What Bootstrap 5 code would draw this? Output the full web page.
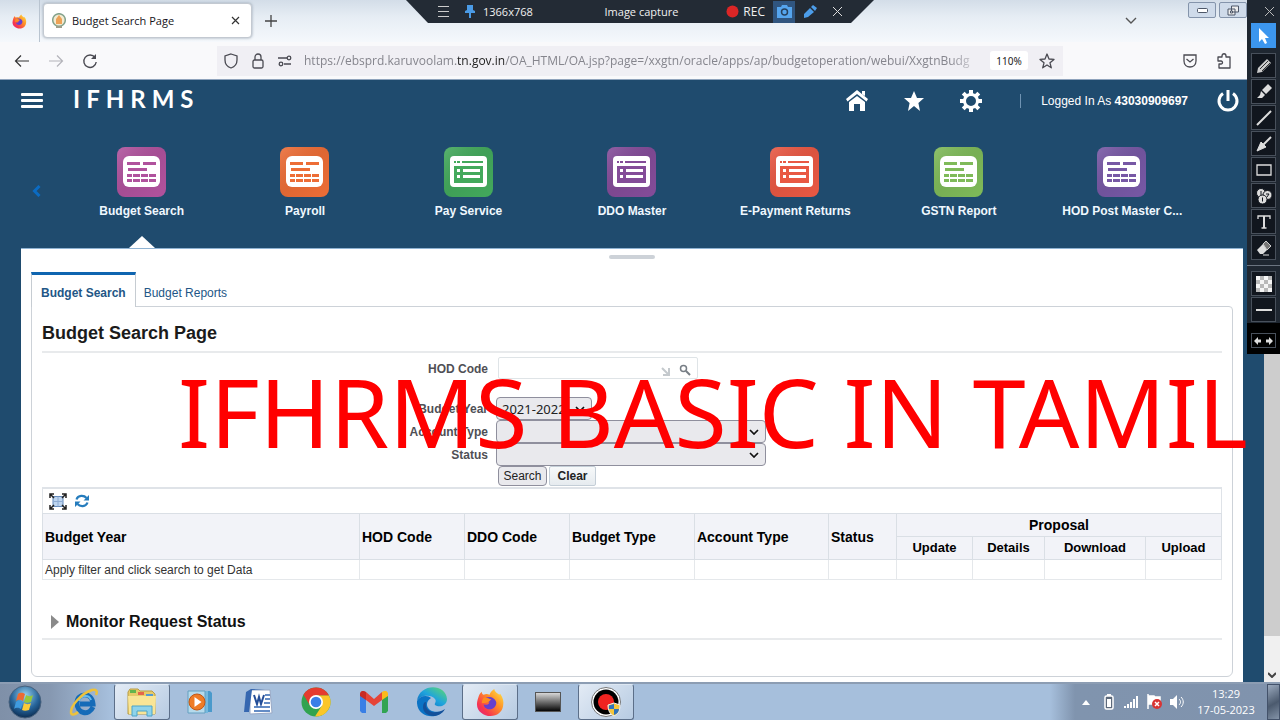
<!DOCTYPE html>
<html lang="en">
<head>
<meta charset="utf-8">
<meta name="viewport" content="width=device-width, initial-scale=1">
<title>Budget Search Page</title>
<link href="https://cdn.jsdelivr.net/npm/bootstrap@5.3.0/dist/css/bootstrap.min.css" rel="stylesheet">
<style>
  body { font-family: "Liberation Sans", Arial, sans-serif; font-size: 12px; line-height: 16px; color: #333; background: #1f4b6e; overflow-x: hidden; }
  svg { display: block; flex: none; }
  button { font-family: inherit; }
  .plain { background: none; border: 0; padding: 0; color: inherit; display: flex; align-items: center; justify-content: center; }
  .ui-font { font-family: "Noto Sans", "Open Sans", sans-serif; }

  /* browser tabs */
  .tabstrip { height: 42px; background: linear-gradient(180deg, #d3dde8 0, #e6edf4 40%, #f5f8fc 100%); }
  .pinned { width: 40px; border-right: 1px solid #b9c4d0; }
  .tab-active { width: 209px; height: 35px; margin: 3px 0 0 3px; padding: 0 11px 0 8px; background: #fff; border: 1px solid #c3c9d1; border-radius: 4px; box-shadow: 0 0 3px #9aa5b2; font-family: "Open Sans", sans-serif; font-size: 11px; color: #15141a; gap: 6px; }
  .newtab { width: 38px; height: 42px; color: #444; }
  .tablist { width: 24px; height: 40px; margin-right: 45px; color: #555; }
  .winbtn { width: 28px; height: 16px; margin: 2px 3px 0 0; background: #cfdbea; border: 1px solid #8494ab; border-radius: 2px; color: #4d5768; }
  .strip-end { width: 33px; }

  /* address bar */
  .navrow { height: 38px; background: #f9f9fb; border-bottom: 1px solid #8fa3bc; color: #4a4a52; }
  .nav-side { width: 217px; flex: none; }
  .nav-left { padding-left: 14px; gap: 18px; }
  .nav-right { padding-right: 48px; gap: 18px; justify-content: flex-end; }
  .urlbox { height: 30px; background: #f0eff4; padding: 0 8px 0 6px; gap: 11px; min-width: 0; }
  .url-text { font-size: 12px; color: #85858d; white-space: nowrap; overflow: hidden; min-width: 0; margin-right: -4px; -webkit-mask-image: linear-gradient(90deg, #000 95%, transparent); mask-image: linear-gradient(90deg, #000 95%, transparent); font-family: "Open Sans", sans-serif; }
  .url-text b { color: #222; font-weight: 400; }
  .zoom-pill { width: 38px; height: 19px; background: #fff; border-radius: 3px; font-size: 10px; color: #222; flex: none; }

  /* application header */
  .app { min-width: 0; background: #1f4b6e; }
  .app-head { height: 42px; padding: 0 24px 0 21px; color: #fff; }
  .logo { font-family: Lato, sans-serif; font-weight: 700; font-size: 24px; line-height: 24px; gap: 6px; margin-left: 29px; padding-bottom: 4px; }
  .head-icons { gap: 33px; }
  .head-sep { width: 1px; height: 14px; background: #6f93b3; }
  .launcher { position: relative; padding: 25px 60px 0; height: 126px; }
  .launch { flex: 1 1 0; min-width: 0; position: relative; color: #eff8ff; font-weight: 700; text-decoration: none; }
  .launch svg { margin-bottom: 6px; }
  .launch.current::after { content: ""; position: absolute; bottom: 0; left: 50%; margin-left: -13px; border: 13px solid transparent; border-top: 0; border-bottom: 12px solid #fff; }
  .prev { position: absolute; left: 28px; top: 60px; width: 16px; height: 18px; color: #0b6bc2; }

  /* white page */
  .sheet { margin: 0 21px; background: #fff; padding: 6px 10px 5px; border-top: 1px solid #8fb3d3; }
  .grip { width: 46px; height: 4px; background: #cdd2d8; border-radius: 2px; }
  .subtabs { margin-top: 13px; position: relative; z-index: 1; }
  .subtabs a { height: 34px; padding: 7px 8px 0; display: flex; align-items: center; text-decoration: none; color: #225686; }
  .subtabs a.on { height: 35px; margin-bottom: -1px; background: #fff; border: 1px solid #c6ccd2; border-top: 3px solid #0f65b0; border-bottom: 0; font-weight: 700; padding: 3px 9px 0; }
  .pane { border: 1px solid #cdd2d8; border-radius: 0 4px 6px 6px; padding: 14px 10px 0; }
  .pane h1 { font-size: 18px; line-height: 24px; font-weight: 700; color: #1b1b1b; margin: 0; padding-bottom: 6px; border-bottom: 2px solid #e8eaec; }
  .query { padding-top: 4px; }
  .query label { width: 446px; text-align: right; font-weight: 700; color: #4f4f55; }
  .lov-row { margin-bottom: 18px; }
  .lov { width: 200px; height: 22px; margin-left: 10px; border: 1px solid #dfe4e7; border-radius: 2px; padding: 0 6px 0 0; }
  .lov input { border: 0; background: none; outline: 0; min-width: 0; font-size: 12px; }
  .query select { margin-left: 8px; height: 23px; width: 270px; border: 1px solid #8f8f9d; border-radius: 4px; padding: 0 20px 0 5px; font: 13px/20px "Noto Sans", sans-serif; color: #222; appearance: none; background: #e9e9ed url("data:image/svg+xml,%3Csvg xmlns='http://www.w3.org/2000/svg' width='10' height='6'%3E%3Cpath d='M1 1l4 4 4-4' fill='none' stroke='%23111' stroke-width='1.7'/%3E%3C/svg%3E") no-repeat right 6px center; }
  .query select.short { width: 96px; }
  .actions { margin: 0 0 1px 456px; gap: 2px; }
  .actions button { height: 20px; border: 1px solid #8f8f9d; border-radius: 4px; background: #e9e9ed; font-size: 12px; line-height: 16px; padding: 0 4px; width: 49px; color: #222; }
  .actions .clear { border-color: #c4ced7; border-radius: 2px; background: linear-gradient(#f7f9fa, #e6ebef); font-weight: 700; width: 47px; }
  .grid-tools { height: 26px; border: 1px solid #dfe3e8; border-width: 2px 1px 0; padding: 0 6px; gap: 8px; }
  .results { width: 100%; table-layout: fixed; border-collapse: collapse; }
  .results th { background: #f2f3f8; color: #000; font-size: 14px; line-height: 16px; }
  .results thead tr + tr th { font-size: 13px; }
  .results th, .results td { border: 1px solid #dadfe5; padding: 3px 2px; height: 22px; white-space: nowrap; }
  .results td { height: 20px; padding: 1px 2px; border-color: #e5e8eb; }
  .monitor { margin-top: 32px; padding: 0 0 6px 9px; border-bottom: 2px solid #e8eaec; }
  .monitor button { gap: 7px; font-size: 16px; line-height: 20px; font-weight: 700; color: #111; }
  .scroll { width: 16px; flex: none; background: #f0f0f0; }
  .thumb { flex: 1; background: #cdcdcd; }
  .scroll-down { height: 46px; padding-bottom: 4px; color: #444; }
  .caption { position: absolute; left: 178px; top: 276px; font-family: "Noto Sans", sans-serif; font-size: 95px; line-height: 110px; color: #f00; white-space: nowrap; pointer-events: none; z-index: 10; }

  /* recorder overlays */
  .capture { position: absolute; z-index: 9; top: 0; left: 50%; transform: translateX(-50%); width: 468px; height: 23px; background: #232b35; clip-path: polygon(0 0, 100% 0, 445px 100%, 22px 100%); color: #f0f0f0; padding: 0 32px; font-family: "Open Sans", sans-serif; font-size: 11px; }
  .capture .rec { font-size: 12px; }
  .capture .snap { width: 22px; height: 22px; background: #30557f; color: #55a5ee; }
  .tools { position: absolute; z-index: 9; right: 0; top: 0; width: 33px; height: 353px; background: #1f2731; color: #ddd; padding-left: 4px; }
  .tools button { width: 25px; height: 25px; margin-bottom: 1px; border: 1px solid #48505b; background: #11161e; }
  .tools button.shut { border: 0; background: none; height: 23px; width: 33px; margin: 0 0 0 2px; }
  .tools button.on { background: #3c96ee; border: 0; margin-bottom: 5px; color: #fff; }
  .tools hr { margin: 5px 0 5px -4px; border-color: #6b7480; width: 33px; opacity: 1; }
  .tools .resize { margin-left: -4px; background: #000; padding: 10px 0 6px 4px; }
  .tools .resize button { height: 15px; margin: 0; background: #000; }

  /* taskbar */
  .taskbar { height: 38px; border-top: 2px solid #8c9db3; background: linear-gradient(90deg, #7f90a8 0, #8698b1 50px, #a6bfdc 110px, #a6bfdc calc(100% - 230px), #8094ae calc(100% - 205px), #8093ad 100%); color: #fff; }
  .start { width: 50px; margin-right: 6px; }
  .task { width: 56px; height: 36px; margin-right: 2px; }
  .task.open { border: 1px solid #5c6f89; border-top-color: #dde7f2; border-radius: 3px; background: linear-gradient(135deg, #e3ebf5, #b7cbe2); }
  .tray { gap: 8px; }
  .clock { width: 66px; font-family: "Open Sans", sans-serif; font-size: 11px; text-align: center; }
  .desktop { width: 13px; background: linear-gradient(150deg, #9aa9bd, #4b5a6e 55%, #8393a8); border: 1px solid #43526a; }
</style>
</head>
<body class="d-flex flex-column min-vh-100 position-relative">
<svg width="0" height="0" class="position-absolute" aria-hidden="true">
  <defs>
    <linearGradient id="fx" x1="1" y1="0" x2="0" y2="1"><stop offset="0" stop-color="#fff04a"/><stop offset=".4" stop-color="#ff9026"/><stop offset=".75" stop-color="#f7354f"/><stop offset="1" stop-color="#d8228b"/></linearGradient>
    <linearGradient id="edge" x1="0" y1="1" x2="1" y2="0"><stop offset="0" stop-color="#0b60b8"/><stop offset=".5" stop-color="#1fa4dd"/><stop offset="1" stop-color="#62dc68"/></linearGradient>
    <radialGradient id="orb" cx=".5" cy=".3" r=".7"><stop offset="0" stop-color="#9bd4ef"/><stop offset=".6" stop-color="#27659b"/><stop offset="1" stop-color="#0c2d52"/></radialGradient>
    <linearGradient id="metal" x1="0" y1="0" x2="0" y2="1"><stop offset="0" stop-color="#ddd"/><stop offset="1" stop-color="#000"/></linearGradient>
    <linearGradient id="shine" x1="0" y1="0" x2="1" y2="1"><stop offset="0" stop-color="#fff" stop-opacity=".12"/><stop offset=".5" stop-color="#000" stop-opacity=".06"/><stop offset="1" stop-color="#000" stop-opacity="0"/></linearGradient>
  </defs>
  <symbol id="firefox" viewBox="0 0 30 30">
    <path d="M3 8c1-2 2-3 3-4 0 2 1 3 2 3 2-1 4-1 6 0 1-3 3-5 5-6 0 3 3 4 5 6l1-1c3 4 4 8 3 13-1 6-6 10-13 10S1 24 1 17c0-3 1-6 2-9z" fill="url(#fx)"/>
    <path d="M10 10c4-2 10 0 11 5 0 5-4 7-7 7-4 0-6-3-6-5 3 1 5 0 6-2-2 0-3-1-2-3z" fill="#6540cf"/><path d="M8 10c3-1 5 1 8 2-2 1-2 3-5 3-2 1-4 0-5 1 0-3 1-5 2-6z" fill="#ff8b1f"/>
  </symbol>
  <symbol id="form" viewBox="0 0 50 50">
    <rect width="49" height="50" rx="8" fill="currentColor"/><rect width="49" height="50" rx="8" fill="url(#shine)"/>
    <rect x="6" y="9" width="37" height="31" rx="6" fill="#fff"/>
    <path d="M10 15h13v3H10zm16 0h13v3H26zM11 21h19v3H11zM10 27h5v3h-5zm6 0h7v3h-7zm8 0h7v3h-7zm8 0h7v3h-7zM10 32h5v3h-5zm6 0h7v3h-7zm8 0h7v3h-7zm8 0h7v3h-7z" fill="currentColor"/>
  </symbol>
  <symbol id="window" viewBox="0 0 50 50">
    <rect width="49" height="50" rx="8" fill="currentColor"/><rect width="49" height="50" rx="8" fill="url(#shine)"/>
    <rect x="6" y="9" width="37" height="31" rx="4" fill="#fff"/>
    <path d="M10 14h2v2h-2zm3 0h3v2h-3zm5 0h21v2H18zM10 19h29v17H10z" fill="currentColor"/>
    <path d="M13 22h3v3h-3zm6 0h17v3H19zM13 28h3v3h-3zm6 0h17v3H19z" fill="#fff"/>
  </symbol>
</svg>

<header>
  <div class="tabstrip d-flex">
    <div class="pinned d-flex align-items-center justify-content-center"><svg width="15" height="15"><use href="#firefox"/></svg></div>
    <div class="tab-active d-flex align-items-center">
      <svg width="14" height="16" viewBox="0 0 14 16"><circle cx="7" cy="7" r="6.300" fill="#f3ead0" stroke="#83a28c" stroke-width="1.500"/><path d="M7 2l3 4v5H4V6z" fill="#eda256"/><path d="M4 13h6v2H4z" fill="#9d9f8c"/></svg>
      <span class="flex-grow-1 text-nowrap">Budget Search Page</span>
      <button class="plain" aria-label="Close tab"><svg width="9" height="9" viewBox="0 0 9 9" stroke="#333" stroke-width="1.200"><path d="M1 1l7 7M8 1L1 8"/></svg></button>
    </div>
    <button class="plain newtab" aria-label="New tab"><svg width="12" height="12" viewBox="0 0 12 12" stroke="currentColor" stroke-width="1.300"><path d="M6 0v12M0 6h12"/></svg></button>
    <button class="plain tablist ms-auto" aria-label="List all tabs"><svg width="12" height="7" viewBox="0 0 12 7" fill="none" stroke="currentColor" stroke-width="1.400"><path d="M1 1l5 5 5-5"/></svg></button>
    <button class="plain winbtn" aria-label="Minimise"><svg width="11" height="5" viewBox="0 0 11 5" fill="#fff" stroke="currentColor"><rect x=".5" y=".5" width="10" height="4" rx="1"/></svg></button>
    <button class="plain winbtn me-0" aria-label="Restore"><svg width="12" height="11" viewBox="0 0 12 11" fill="#eee" stroke="currentColor"><path d="M4.500 1h7v6h-7zM1 4h7v6H1z"/><path d="M3.500 6h2v2h-2z"/></svg></button>
    <span class="strip-end"></span>
  </div>
  <div class="navrow d-flex align-items-center">
    <div class="nav-side nav-left d-flex">
      <button class="plain" aria-label="Back"><svg width="16" height="16" viewBox="0 0 16 16" fill="none" stroke="#333" stroke-width="1.200"><path d="M15 8H2M7 2.500L1.500 8 7 13.500"/></svg></button>
      <button class="plain" aria-label="Forward"><svg width="16" height="16" viewBox="0 0 16 16" fill="none" stroke="#b4b4ba" stroke-width="1.200"><path d="M1 8h13M9 2.500L14.500 8 9 13.500"/></svg></button>
      <button class="plain" aria-label="Reload"><svg width="16" height="16" viewBox="0 0 16 16" fill="none" stroke="currentColor" stroke-width="1.400"><path d="M13 4.500A6.200 6.200 0 1 0 14.200 9"/><path d="M14 1v5H9z" fill="currentColor" stroke="none"/></svg></button>
    </div>
    <div class="urlbox d-flex align-items-center flex-grow-1">
      <svg width="16" height="16" viewBox="0 0 16 16" fill="none" stroke="currentColor" stroke-width="1.300"><path d="M8 1l6 2v4c0 4-3 7-6 8-3-1-6-4-6-8V3z"/></svg>
      <svg width="16" height="16" viewBox="0 0 16 16" fill="none" stroke="currentColor" stroke-width="1.300"><rect x="3" y="7" width="10" height="8" rx="1.500"/><path d="M5 7V4a3 3 0 0 1 6 0v3"/></svg>
      <svg width="16" height="16" viewBox="0 0 16 16" fill="none" stroke="currentColor" stroke-width="1.300"><path d="M1 5h9M7 11h7"/><circle cx="12" cy="5" r="1.800"/><circle cx="4" cy="11" r="1.800"/></svg>
      <div class="url-text flex-grow-1">https://ebsprd.karuvoolam.<b>tn.gov.in</b>/OA_HTML/OA.jsp?page=/xxgtn/oracle/apps/ap/budgetoperation/webui/XxgtnBudg</div>
      <button class="plain zoom-pill ui-font">110%</button>
      <svg width="16" height="16" viewBox="0 0 16 16" fill="none" stroke="currentColor" stroke-width="1.300" stroke-linejoin="round"><path d="M8 1l2 5 5 .4-4 3.400 1.300 5L8 12l-4.300 2.800 1.300-5-4-3.400L6 6z"/></svg>
    </div>
    <div class="nav-side nav-right d-flex">
      <button class="plain" aria-label="Save to Pocket"><svg width="16" height="16" viewBox="0 0 16 16" fill="none" stroke="currentColor" stroke-width="1.300"><path d="M2 2h12v6c0 8-12 8-12 0zM4.500 6L8 9l3.500-3"/></svg></button>
      <button class="plain" aria-label="Extensions"><svg width="16" height="16" viewBox="0 0 16 16" fill="none" stroke="currentColor" stroke-width="1.300" stroke-linejoin="round"><path d="M2 4h4V3c0-3 4-3 4 0v1h4v11H3v-4h2c2 0 2-3 0-3H2z"/></svg></button>
    </div>
  </div>
</header>

<div class="d-flex flex-grow-1 position-relative">
  <main class="app flex-grow-1 d-flex flex-column">
    <div class="app-head d-flex align-items-center">
      <button class="plain" aria-label="Menu"><svg width="23" height="18" viewBox="0 0 23 18" fill="#fff"><rect y="1" width="22" height="3" rx="1"/><rect y="7" width="22" height="3" rx="1"/><rect y="13" width="22" height="3" rx="1"/></svg></button>
      <div class="logo d-flex"><span>I</span><span>F</span><span>H</span><span>R</span><span>M</span><span>S</span></div>
      <div class="head-icons d-flex align-items-center ms-auto">
        <a href="#" aria-label="Home"><svg width="24" height="24" viewBox="0 0 24 24" fill="#fff"><path d="M12 1l11 9-1.500 2.500L12 5l-9.500 7.500L1 10zM17 2h3v5l-3-2z"/><path d="M4 13l8-6 8 6v9h-5v-7H9v7H4z"/></svg></a>
        <a href="#" aria-label="Favorites"><svg width="24" height="24" viewBox="0 0 24 24" fill="#fff"><path d="M12 2l3 7h7l-5.600 5L18 22l-6-5-6 5 1.600-8L2 9h7z"/></svg></a>
        <a href="#" aria-label="Settings"><svg width="24" height="24" viewBox="0 0 24 24" fill="none" stroke="#fff"><circle cx="12" cy="12" r="6.500" stroke-width="3"/><path d="M12 1v4M12 19v4M1 12h4M19 12h4M4.200 4.200l3 3M16.800 16.800l3 3M4.200 19.800l3-3M16.800 7.200l3-3" stroke-width="4"/></svg></a>
        <span class="head-sep mx-1"></span>
      </div>
      <div class="ms-3 me-4 text-nowrap"><span>Logged In As</span> <b>43030909697</b></div>
      <button class="plain ms-1" aria-label="Logout"><svg width="24" height="24" viewBox="0 0 24 24" fill="none" stroke="#fff" stroke-width="3"><path d="M12 1v11M7 4.500a9 9 0 1 0 10 0"/></svg></button>
    </div>

    <nav class="launcher d-flex">
      <button class="plain prev" aria-label="Previous"><svg width="9" height="12" viewBox="0 0 9 12" fill="none" stroke="currentColor" stroke-width="3"><path d="M7.500 1L2.500 6l5 5"/></svg></button>
      <a href="#" class="launch current d-flex flex-column align-items-center"><svg width="50" height="50" color="#b0529d"><use href="#form"/></svg>Budget Search</a>
      <a href="#" class="launch d-flex flex-column align-items-center"><svg width="50" height="50" color="#ed6d36"><use href="#form"/></svg>Payroll</a>
      <a href="#" class="launch d-flex flex-column align-items-center"><svg width="50" height="50" color="#43a95c"><use href="#window"/></svg>Pay Service</a>
      <a href="#" class="launch d-flex flex-column align-items-center"><svg width="50" height="50" color="#844c99"><use href="#window"/></svg>DDO Master</a>
      <a href="#" class="launch d-flex flex-column align-items-center"><svg width="50" height="50" color="#e95843"><use href="#window"/></svg>E-Payment Returns</a>
      <a href="#" class="launch d-flex flex-column align-items-center"><svg width="50" height="50" color="#7fba59"><use href="#form"/></svg>GSTN Report</a>
      <a href="#" class="launch d-flex flex-column align-items-center"><svg width="50" height="50" color="#7758a5"><use href="#form"/></svg>HOD Post Master C...</a>
    </nav>

    <section class="sheet flex-grow-1 d-flex flex-column">
      <div class="grip mx-auto"></div>
      <div class="subtabs d-flex"><a href="#" class="on">Budget Search</a><a href="#">Budget Reports</a></div>
      <div class="pane flex-grow-1">
        <h1>Budget Search Page</h1>
        <form class="query">
          <div class="d-flex lov-row">
            <label for="hod" class="pt-1">HOD Code</label>
            <div class="lov d-flex align-items-center">
              <input id="hod" type="text" class="flex-grow-1">
              <svg width="10" height="10" viewBox="0 0 10 10" class="me-2 mt-2" fill="none" stroke="#c4c9cd" stroke-width="2"><path d="M1 1l6 6M8 1v7H2"/></svg>
              <button type="button" class="plain mt-1" aria-label="Search for HOD Code"><svg width="12" height="12" viewBox="0 0 12 12" fill="none" stroke="#777e85" stroke-width="1.500"><circle cx="4.500" cy="4.500" r="3"/><path d="M7 7l4 4" stroke-width="2"/></svg></button>
            </div>
          </div>
          <div class="d-flex align-items-center"><label for="year">Budget Year</label><select id="year" class="short"><option>2021-2022</option></select></div>
          <div class="d-flex align-items-center"><label for="acct">Account Type</label><select id="acct"><option></option></select></div>
          <div class="d-flex align-items-center"><label for="stat">Status</label><select id="stat"><option></option></select></div>
          <div class="actions d-flex"><button type="button">Search</button><button type="button" class="clear">Clear</button></div>
        </form>
        <div class="grid-tools d-flex align-items-center">
          <button class="plain" aria-label="Expand table"><svg width="18" height="17" viewBox="0 0 18 17"><rect x="4" y="3.500" width="10" height="10" fill="#bdd5f0" stroke="#6389bb"/><path d="M4 8.500h10M9 3.500v10" stroke="#8eacd4"/><path d="M1 5V1h4M13 1h4v4M17 12v4h-4M5 16H1v-4M1 1l4 4M17 1l-4 4M17 16l-4-4M1 16l4-4" fill="none" stroke="#222" stroke-width="1.500"/></svg></button>
          <button class="plain" aria-label="Refresh"><svg width="14" height="14" viewBox="0 0 14 14" fill="none" stroke="#257cbd" stroke-width="2.200"><path d="M1.500 5.500C3 1 9 1 11.500 4M12.500 8.500C11 13 5 13 2.500 10"/><path d="M14 1v5.500H8.500zM0 13V7.500h5.500z" fill="#257cbd" stroke="none"/></svg></button>
        </div>
        <table class="results">
          <colgroup><col><col style="width:105px"><col style="width:105px"><col style="width:125px"><col style="width:134px"><col style="width:68px"><col style="width:76px"><col style="width:72px"><col style="width:101px"><col style="width:76px"></colgroup>
          <thead>
            <tr><th rowspan="2">Budget Year</th><th rowspan="2">HOD Code</th><th rowspan="2">DDO Code</th><th rowspan="2">Budget Type</th><th rowspan="2">Account Type</th><th rowspan="2">Status</th><th colspan="4" class="text-center">Proposal</th></tr>
            <tr class="text-center"><th>Update</th><th>Details</th><th>Download</th><th>Upload</th></tr>
          </thead>
          <tbody><tr><td>Apply filter and click search to get Data</td><td></td><td></td><td></td><td></td><td></td><td></td><td></td><td></td><td></td></tr></tbody>
        </table>
        <div class="monitor"><button class="plain"><svg width="8" height="14" viewBox="0 0 8 14" fill="#8a8a8a"><path d="M0 0l8 7-8 7z"/></svg>Monitor Request Status</button></div>
      </div>
    </section>
  </main>
  <div class="scroll d-flex flex-column"><div class="thumb"></div><button class="plain scroll-down align-items-end" aria-label="Scroll down"><svg width="8" height="6" viewBox="0 0 8 6" fill="none" stroke="currentColor" stroke-width="2"><path d="M0 1l4 4 4-4"/></svg></button></div>
  <div class="caption">IFHRMS BASIC IN TAMIL</div>
</div>

<footer class="taskbar d-flex">
  <button class="plain start" aria-label="Start"><svg width="34" height="34" viewBox="0 0 34 34"><circle cx="17" cy="17" r="16" fill="url(#orb)" stroke="#49617c"/><path d="M10 9c3-2 5-1 7 0l-2 7c-2-1-4-2-7 0z" fill="#ec6a32"/><path d="M18 10c2 1 4 2 7 0l-2 7c-3 1-5 1-7 0z" fill="#96c83c"/><path d="M8 17c3-2 5-1 7 0l-2 7c-2-1-4-2-7 0z" fill="#3f9be0"/><path d="M16 18c2 1 4 2 7 0l-2 7c-3 1-5 1-7 0z" fill="#fbcb38"/></svg></button>
  <button class="plain task" aria-label="Internet Explorer"><svg width="32" height="30" viewBox="0 0 32 30" fill="none"><path d="M25 20c-4 9-16 7-16-4 0-10 15-12 16 1H12" stroke="#156bb8" stroke-width="5"/><path d="M11 14c2-6 10-7 12-1" stroke="#67bdf0" stroke-width="2"/><path d="M28 8c2-4 0-6-4-5C14 6 2 19 3 26c1 3 5 1 7-1" stroke="#edc23c" stroke-width="2.500"/></svg></button>
  <button class="plain task open" aria-label="File Explorer"><svg width="32" height="30" viewBox="0 0 32 30"><path d="M2 5l2-3h8l2 2h12l3 3v20H2z" fill="#e6cb69" stroke="#b89c45"/><path d="M4 3h6v3H4z" fill="#63b54d"/><path d="M12 5h6v3h-6z" fill="#e5654b"/><path d="M20 7h7v3h-7z" fill="#539ad5"/><path d="M2 9h28l-1 18H3z" fill="#f9e596"/><path d="M6 29V19h20v10h-5v-5H11v5z" fill="#8ed3eb" stroke="#4ba4c9"/></svg></button>
  <button class="plain task" aria-label="Media Player"><svg width="28" height="26" viewBox="0 0 28 26"><path d="M10 2h14l2 2v19H10z" fill="#4a9acb"/><path d="M6 2h16v22H6z" fill="#75b9de"/><path d="M2 2h17v22H2z" fill="#b5daec" stroke="#659fc0"/><circle cx="11" cy="13" r="8" fill="#ee7c26" stroke="#c25716"/><path d="M8.500 8l7 5-7 5z" fill="#fff"/></svg></button>
  <button class="plain task" aria-label="Word"><svg width="30" height="28" viewBox="0 0 30 28"><path d="M7 2h20l2 23-22 1z" fill="#fff" stroke="#98a8c5"/><path d="M3 4l5-3h14L9 2 6 24H1z" fill="#3667b0"/><path d="M11 7l3 9 2-7 2 7 3-9" fill="none" stroke="#244e98" stroke-width="2"/><path d="M22 7h5M22 11h5M21 15h6M11 19h16M11 23h16" stroke="#3267b2" stroke-width="1.500"/></svg></button>
  <button class="plain task" aria-label="Chrome"><svg width="30" height="30" viewBox="0 0 30 30"><circle cx="15" cy="15" r="14.500" fill="#31a350"/><path d="M2.500 7.700A14.500 14.500 0 0 1 28 8.500H15l-6 10z" fill="#e53b2f"/><path d="M28 8.500A14.500 14.500 0 0 1 14 29.500l7-11 0-7-6-3z" fill="#fbc628"/><circle cx="15" cy="15" r="7" fill="#fff"/><circle cx="15" cy="15" r="5.300" fill="#397ee8"/></svg></button>
  <button class="plain task" aria-label="Gmail"><svg width="28" height="22" viewBox="0 0 28 22"><path d="M0 3l6 5v14H2l-2-2z" fill="#397fe5"/><path d="M28 3l-6 5v14h4l2-2z" fill="#31a453"/><path d="M6 1l8 7 8-7v8l-8 6-8-6z" fill="#e54438"/><path d="M6 9L0 5V3c0-3 3-4 6-2z" fill="#c72b26"/><path d="M22 9l6-4V3c0-3-3-4-6-2z" fill="#fbba1b"/></svg></button>
  <button class="plain task" aria-label="Edge"><svg width="30" height="30" viewBox="0 0 30 30"><path d="M0 14C2-4 29-4 30 12c0 7-8 9-12 6-1-2 2-3 0-6-4-5-15-4-18 2z" fill="url(#edge)"/><path d="M0 14c3-6 11-6 14-3-9 6-2 17 12 13-6 9-27 7-26-10z" fill="#0b73c5"/><path d="M9 15c-2 9 8 14 19 7-6 11-22 8-22-2 0-3 1-5 3-5z" fill="#14519a"/></svg></button>
  <button class="plain task open" aria-label="Firefox"><svg width="29" height="29"><use href="#firefox"/></svg></button>
  <button class="plain task" aria-label="Console"><svg width="26" height="20" viewBox="0 0 26 20"><rect x=".5" y=".5" width="25" height="19" fill="url(#metal)" stroke="#555"/></svg></button>
  <button class="plain task open" aria-label="Screen recorder"><svg width="30" height="30" viewBox="0 0 30 30"><circle cx="15" cy="15" r="14.500" fill="#fff" stroke="#777"/><circle cx="15" cy="15" r="12.500"/><circle cx="15" cy="15" r="8" fill="#ef2320"/><path d="M17 18l6-2 6 2c0 6-2 9-6 11-4-2-6-5-6-11z" fill="#f5c63b" stroke="#eee"/><path d="M23 17l-5 1.500V22h5zM23 22h5c0 3-2 5-5 6z" fill="#2d73bd"/></svg></button>
  <div class="tray d-flex align-items-center ms-auto">
    <svg width="8" height="5" viewBox="0 0 8 5" fill="#fff" class="me-1"><path d="M4 0l4 5H0z"/></svg>
    <svg width="14" height="16" viewBox="0 0 14 16"><rect x="3" y="2" width="8" height="13" rx="1.500" fill="#5d6a7c" stroke="#fff" stroke-width="1.500"/><path d="M5 0h4v2H5zM5 5h4v8H5z" fill="#fff"/></svg>
    <svg width="15" height="14" viewBox="0 0 15 14" fill="#fff"><path d="M0 11h2v2H0zm3-2h2v4H3zm3-2h2v6H6zm3-3h2v9H9zm3-3h2v12h-2z"/></svg>
    <svg width="15" height="16" viewBox="0 0 15 16"><path d="M1 0v15M1 2h6l1 1h5v7H1z" fill="#fff" stroke="#fff" stroke-width="1.500"/><circle cx="10" cy="10" r="5" fill="#d83434"/><path d="M8 8l4 4M12 8l-4 4" stroke="#fff" stroke-width="1.500"/></svg>
    <svg width="15" height="14" viewBox="0 0 15 14" fill="none" stroke="#fff"><path d="M0 4h3l4-4v14l-4-4H0z" fill="#fff" stroke="none"/><path d="M9 4c2 2 2 4 0 6M11 2c3 3 3 7 0 10"/></svg>
    <div class="clock">13:29<br>17-05-2023</div>
    <button class="plain desktop align-self-stretch" aria-label="Show desktop"></button>
  </div>
</footer>

<div class="capture d-flex align-items-center">
  <svg width="11" height="11" viewBox="0 0 11 11" stroke="#ccc"><path d="M0 .5h11M0 5.500h11M0 10.500h11"/></svg>
  <svg width="10" height="13" viewBox="0 0 10 13" fill="#4a9be6" class="ms-3"><path d="M2 0h6v5l2 1v2H6v5H4V8H0V6l2-1z"/></svg>
  <span class="ms-2 me-auto">1366x768</span>
  <span class="me-5">Image capture</span>
  <svg width="13" height="13" viewBox="0 0 13 13" class="me-1"><circle cx="6.500" cy="6.500" r="6" fill="#dc2626"/></svg>
  <span class="rec me-2">REC</span>
  <button class="plain snap" aria-label="Take screenshot"><svg width="15" height="13" viewBox="0 0 15 13"><path d="M0 2h4l1-2h5l1 2h4v11H0z" fill="currentColor"/><circle cx="7.500" cy="7" r="3" fill="none" stroke="#26415f" stroke-width="1.500"/></svg></button>
  <button class="plain ms-2 me-3" aria-label="Draw"><svg width="14" height="13" viewBox="0 0 14 13" fill="#4c9de9"><path d="M1 9l6-6 4 4-6 5-4 1zM8 2l2-2 4 3-2 3z"/></svg></button>
  <button class="plain" aria-label="Close recorder"><svg width="9" height="9" viewBox="0 0 9 9" stroke="#ddd"><path d="M0 0l9 9M9 0L0 9"/></svg></button>
</div>

<aside class="tools">
  <button class="plain shut" aria-label="Close tools"><svg width="9" height="9" viewBox="0 0 9 9" stroke="#bbb"><path d="M0 0l9 9M9 0L0 9"/></svg></button>
  <button class="plain on" aria-label="Select"><svg width="12" height="16" viewBox="0 0 12 16" fill="currentColor"><path d="M1 0l10 10H7l2 5-2 1-3-5-3 3z"/></svg></button>
  <button class="plain" aria-label="Pencil"><svg width="16" height="16" viewBox="0 0 16 16" fill="#ccc"><path d="M1 15l1-5 9-9 4 4-9 9z"/><path d="M4 11l8-8M6 13l8-8" stroke="#333"/></svg></button>
  <button class="plain" aria-label="Highlighter"><svg width="16" height="16" viewBox="0 0 16 16" fill="#ddd"><path d="M6 6l6-6 4 4-6 6zM5 7l4 4-3 3H1l3-3z"/></svg></button>
  <button class="plain" aria-label="Line"><svg width="16" height="16" viewBox="0 0 16 16" stroke="#ddd" stroke-width="2"><path d="M1 15L15 1"/></svg></button>
  <button class="plain" aria-label="Arrow"><svg width="16" height="16" viewBox="0 0 16 16" fill="#ddd" stroke="#ddd"><path d="M15 1L7 9" stroke-width="2"/><path d="M1 15l4-9 5 5z"/></svg></button>
  <button class="plain" aria-label="Rectangle"><svg width="16" height="12" viewBox="0 0 16 12" fill="none" stroke="#ddd" stroke-width="1.300"><path d="M1 1h14v10H1z"/></svg></button>
  <button class="plain" aria-label="Numbering"><svg width="16" height="16" viewBox="0 0 16 16" fill="#ddd" stroke="#11161e"><circle cx="5" cy="5" r="4.500"/><circle cx="11.500" cy="7" r="4.500"/><circle cx="6.500" cy="11.500" r="4.500"/><path d="M5 3v4M10 6h3l-2 3M6.500 9.500v4" fill="none"/></svg></button>
  <button class="plain" aria-label="Text"><svg width="14" height="14" viewBox="0 0 14 14" fill="none" stroke="#ddd"><path d="M1 4V1h12v3M4.500 13h5" stroke-width="1.300"/><path d="M7 1v12" stroke-width="2"/></svg></button>
  <button class="plain" aria-label="Eraser"><svg width="16" height="16" viewBox="0 0 16 16"><path d="M1 10l9-9 5 5-8 8H4z" fill="#ddd"/><path d="M7 4l3-3 5 5-4 4z" fill="#777" stroke="#ccc"/><path d="M7 15h6" stroke="#ddd"/></svg></button>
  <hr>
  <button class="plain" aria-label="Opacity"><svg width="16" height="16" viewBox="0 0 16 16"><path d="M0 0h16v16H0z" fill="#f5f5f5"/><path d="M4 0h4v4H4zm8 0h4v4h-4zM0 4h4v4H0zm8 0h4v4H8zM4 8h4v4H4zm8 0h4v4h-4zM0 12h4v4H0zm8 0h4v4H8z" fill="#b9b9b9"/></svg></button>
  <button class="plain" aria-label="Thickness"><svg width="16" height="2" viewBox="0 0 16 2" fill="#ddd"><path d="M0 0h16v2H0z"/></svg></button>
  <div class="resize"><button class="plain" aria-label="Resize panel"><svg width="19" height="8" viewBox="0 0 19 8" fill="#ddd"><path d="M0 4l4-4v2.500h3v3H4V8zM19 4l-4-4v2.500h-3v3h3V8z"/></svg></button></div>
</aside>
<script src="https://cdn.jsdelivr.net/npm/bootstrap@5.3.0/dist/js/bootstrap.bundle.min.js"></script>
</body>
</html>
